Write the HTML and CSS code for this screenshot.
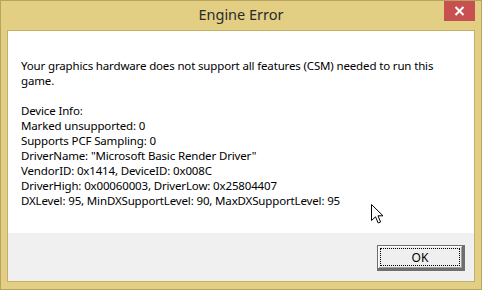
FILE: index.html
```html
<!DOCTYPE html>
<html>
<head>
<meta charset="utf-8">
<link rel="stylesheet" href="styles.css">
</head>
<body>
<div class="window">
  <div class="titlebar">
    <span class="spacer"></span>
    <span class="title">Engine Error</span>
    <span class="close"><svg width="11" height="10" viewBox="0 0 11 10"><path d="M1.5 1 L9.5 9 M9.5 1 L1.5 9" stroke="#fff" stroke-width="2"/></svg></span>
  </div>
  <div class="client">
    <div class="message">
      <p>Your graphics hardware does not support all features (CSM) needed to run this game.</p>
      <p>Device Info:<br>Marked unsupported: 0<br>Supports PCF Sampling: 0<br>DriverName: "Microsoft Basic Render Driver"<br>VendorID: 0x1414, DeviceID: 0x008C<br>DriverHigh: 0x00060003, DriverLow: 0x25804407<br>DXLevel: 95, MinDXSupportLevel: 90, MaxDXSupportLevel: 95</p>
    </div>
    <div class="footer">
      <button class="ok"><span class="focus">OK</span></button>
    </div>
  </div>
</div>
<svg class="cursor" width="13" height="20" viewBox="0 0 13 20"><path d="M0.5 0.5 L0.5 16.5 L4.5 12.8 L7.2 19 L9.6 18 L7 11.8 L12 11.8 Z" fill="#fff" stroke="#000" stroke-width="1" stroke-linejoin="miter"/></svg>
</body>
</html>
```

FILE: styles.css
```css
html, body {
  margin: 0;
  padding: 0;
  width: 482px;
  height: 290px;
  overflow: hidden;
  background: #e3cf84;
}
.window {
  position: relative;
  box-sizing: border-box;
  width: 482px;
  height: 290px;
  border: 1px solid #b8a45c;
  background: #e3cf84;
  display: flex;
  flex-direction: column;
  font-family: "Noto Sans", "Open Sans", sans-serif;
}
.titlebar {
  height: 29px;
  display: grid;
  grid-template-columns: 1fr auto 1fr;
  align-items: start;
}
.title {
  font-size: 14.5px;
  line-height: 29px;
  color: #2b2b2b;
  margin-top: -1px;
}
.close {
  justify-self: end;
  width: 31px;
  height: 20px;
  margin-right: 6px;
  background: #c75050;
  display: flex;
  align-items: center;
  justify-content: center;
}
.client {
  margin: 0 6px 7px 6px;
  border: 1px solid #c4af66;
  flex: 1;
  display: flex;
  flex-direction: column;
}
.message {
  height: 202px;
  box-sizing: border-box;
  background: #fff;
  padding: 27px 12px 0 13px;
  font-size: 11.5px;
  letter-spacing: -0.15px;
  line-height: 15px;
  color: #000;
}
.message p {
  margin: 0 0 15px 0;
}
.footer {
  flex: 1;
  background: #f0f0f0;
  display: flex;
  justify-content: flex-end;
  align-items: flex-start;
  padding: 12px 9px 0 0;
}
.ok {
  box-sizing: border-box;
  width: 88px;
  height: 26px;
  margin: 0;
  padding: 2px;
  background: #efefef;
  border-style: solid;
  border-color: #6f6f6f;
  border-width: 1px 3px 3px 1px;
  box-shadow: inset 1px 1px 0 #fcfcfc, inset -1px -1px 0 #a0a0a0;
  font-family: "Noto Sans", "Open Sans", sans-serif;
  font-size: 12px;
  color: #000;
  display: flex;
}
.focus {
  flex: 1;
  border: 1px dotted #000;
  display: flex;
  align-items: center;
  justify-content: center;
  line-height: 15px;
}
.cursor {
  position: absolute;
  left: 371px;
  top: 204px;
}
```
